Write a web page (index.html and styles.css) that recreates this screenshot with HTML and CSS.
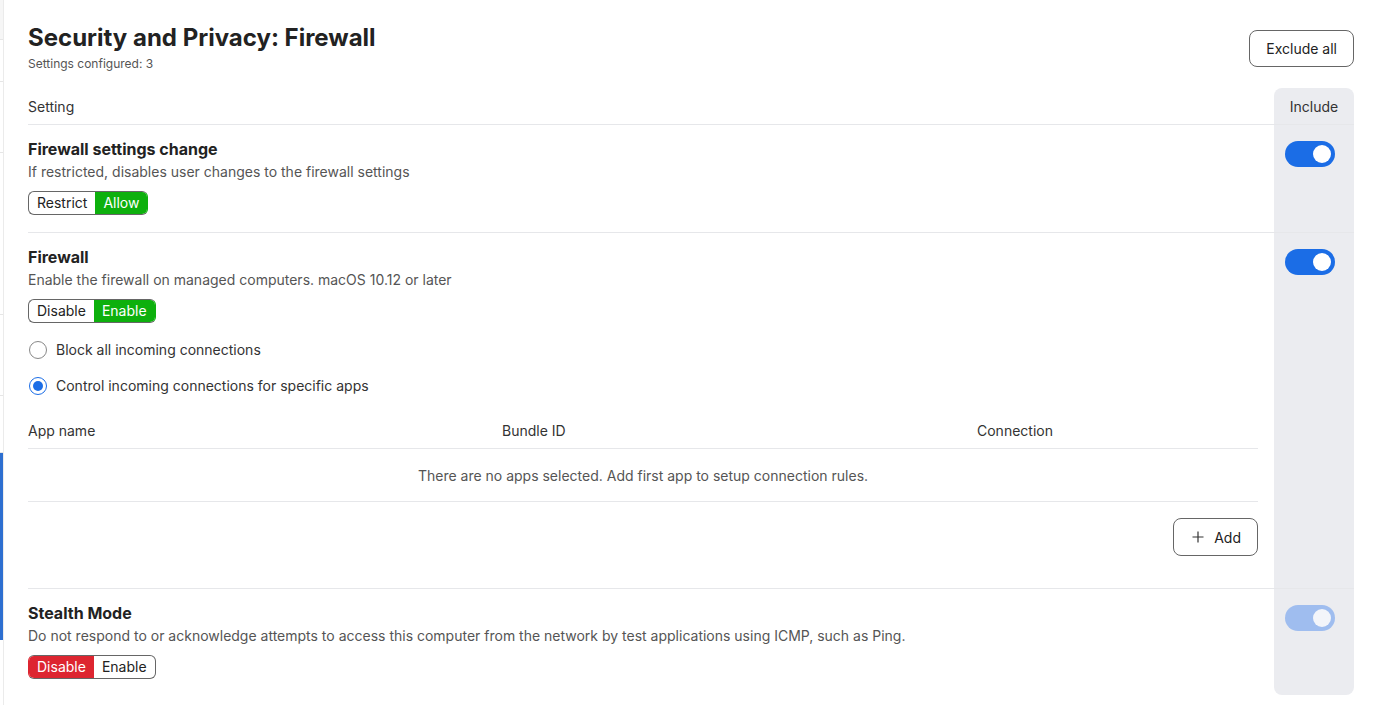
FILE: index.html
```html
<!DOCTYPE html>
<html lang="en">
<head>
  <meta charset="UTF-8" />
  <title>Security and Privacy: Firewall</title>
  <link rel="stylesheet" href="styles.css">
</head>
<body>

<div class="side">
  <div class="side-cell top"></div>
  <div class="side-cell" style="height: 41px"></div>
  <div class="side-cell" style="height: 70px"></div>
  <div class="side-cell" style="height: 161px"></div>
  <div class="side-cell" style="height: 80px"></div>
  <div class="side-cell" style="height: 56px"></div>
  <div class="side-active"></div>
</div>

<main class="content">
  <div class="page-head">
    <div>
      <h1>Security and Privacy: Firewall</h1>
      <div class="configured">Settings configured: 3</div>
    </div>
    <button class="btn">Exclude all</button>
  </div>

  <div class="settings">
    <div class="row head">
      <div class="cell-main">Setting</div>
      <div class="cell-include first">Include</div>
    </div>

    <!-- Firewall settings change -->
    <div class="row">
      <div class="cell-main">
        <div class="setting-title">Firewall settings change</div>
        <div class="setting-desc">If restricted, disables user changes to the firewall settings</div>
        <div class="segmented">
          <span>Restrict</span>
          <span class="on-green">Allow</span>
        </div>
      </div>
      <div class="cell-include"><span class="toggle"></span></div>
    </div>

    <!-- Firewall -->
    <div class="row">
      <div class="cell-main pad-more">
        <div class="setting-title">Firewall</div>
        <div class="setting-desc">Enable the firewall on managed computers. macOS 10.12 or later</div>
        <div class="segmented">
          <span>Disable</span>
          <span class="on-green">Enable</span>
        </div>

        <div class="radios">
          <label class="radio"><span class="dot"></span>Block all incoming connections</label>
          <label class="radio"><span class="dot checked"></span>Control incoming connections for specific apps</label>
        </div>

        <div class="apps">
          <div class="apps-head">
            <div>App name</div>
            <div>Bundle ID</div>
            <div>Connection</div>
          </div>
          <div class="apps-empty">There are no apps selected. Add first app to setup connection rules.</div>
          <div class="apps-actions">
            <button class="btn add">
              <svg width="12" height="12" viewBox="0 0 12 12"><path d="M6 0.5v11M0.5 6h11" stroke="#333" stroke-width="1.2" fill="none"/></svg>
              Add
            </button>
          </div>
        </div>
      </div>
      <div class="cell-include"><span class="toggle"></span></div>
    </div>

    <!-- Stealth Mode -->
    <div class="row last">
      <div class="cell-main">
        <div class="setting-title">Stealth Mode</div>
        <div class="setting-desc">Do not respond to or acknowledge attempts to access this computer from the network by test applications using ICMP, such as Ping.</div>
        <div class="segmented">
          <span class="on-red">Disable</span>
          <span>Enable</span>
        </div>
      </div>
      <div class="cell-include end"><span class="toggle off"></span></div>
    </div>
  </div>
</main>

</body>
</html>
```

FILE: styles.css
```css
body {
  font-family: Inter, 'Noto Sans', sans-serif;
  margin: 0;
  background: #fff;
  color: #222;
  display: flex;
  min-height: 100vh;
}
.side {
  width: 3px;
  border-right: 1px solid #ebebeb;
  flex-shrink: 0;
  display: flex;
  flex-direction: column;
}
.side-cell {
  border-bottom: 1px solid #e6e6e6;
}
.side-cell.top {
  height: 39px;
  background: #f6f6f6;
}
.side-active {
  height: 187px;
  background: #2d6fd0;
  width: 3px;
}
.content {
  flex: 1;
  padding: 0 20px 0 24px;
}
.page-head {
  display: flex;
  justify-content: space-between;
  align-items: flex-start;
  padding-top: 22px;
  height: 66px;
}
h1 {
  margin: 0;
  font-size: 24px;
  line-height: 32px;
  font-weight: 700;
  color: #222;
}
.configured {
  font-size: 12px;
  color: #555;
  margin-top: 2px;
}
.btn {
  font-family: inherit;
  font-size: 14px;
  color: #222;
  background: #fff;
  border: 1px solid #666;
  border-radius: 8px;
  height: 37px;
  padding: 0 16px;
  cursor: pointer;
  margin-top: 8px;
}
.settings {
  display: flex;
  flex-direction: column;
}
.row {
  display: grid;
  grid-template-columns: 1fr 80px;
  border-bottom: 1px solid #e6e7ea;
}
.row.last {
  border-bottom: none;
}
.row.head {
  height: 36px;
  font-size: 14px;
  color: #333;
}
.row.head .cell-main,
.row.head .cell-include {
  display: flex;
  align-items: center;
  padding: 0;
}
.row.head .cell-include {
  justify-content: center;
}
.cell-main {
  padding: 14px 16px 17px 0;
}
.cell-main.pad-more {
  padding-bottom: 32px;
}
.row.last .cell-main {
  padding-bottom: 16px;
}
.cell-include {
  background: #ebecf0;
  display: flex;
  justify-content: flex-start;
  align-items: flex-start;
  padding: 16px 0 0 11px;
}
.cell-include.first {
  border-radius: 8px 8px 0 0;
}
.cell-include.end {
  border-radius: 0 0 8px 8px;
}
.setting-title {
  font-size: 16px;
  line-height: 20px;
  font-weight: 700;
  color: #222;
}
.setting-desc {
  font-size: 14px;
  line-height: 20px;
  color: #555;
  margin-top: 3px;
}
.segmented {
  display: inline-flex;
  margin-top: 9px;
  border: 1px solid #666;
  border-radius: 6px;
  overflow: hidden;
  height: 22px;
  font-size: 14px;
}
.segmented span {
  padding: 0 8px;
  line-height: 22px;
  color: #222;
}
.segmented .on-green {
  background: #0db00d;
  color: #fff;
}
.segmented .on-red {
  background: #dd2530;
  color: #fff;
}
.segmented:has(.on-green) {
  border-right-color: #0db00d;
}
.segmented:has(.on-red) {
  border-left-color: #dd2530;
}
.toggle {
  width: 50px;
  height: 26px;
  border-radius: 13px;
  background: #1b6de6;
  position: relative;
}
.toggle::after {
  content: '';
  position: absolute;
  right: 4px;
  top: 4px;
  width: 18px;
  height: 18px;
  border-radius: 50%;
  background: #fff;
}
.toggle.off {
  background: #9fbdef;
}
.toggle.off::after {
  background: #f3f5fa;
}
.radios {
  display: flex;
  flex-direction: column;
  gap: 16px;
  margin-top: 17px;
}
.radio {
  display: flex;
  align-items: center;
  gap: 9px;
  font-size: 14px;
  line-height: 20px;
  color: #333;
}
.dot {
  width: 18px;
  height: 18px;
  border: 1px solid #888;
  border-radius: 50%;
  box-sizing: border-box;
  margin-left: 1px;
  position: relative;
}
.dot.checked {
  border-color: #1b6de6;
  border-width: 1.5px;
}
.dot.checked::after {
  content: '';
  position: absolute;
  left: 2.5px;
  top: 2.5px;
  width: 10px;
  height: 10px;
  border-radius: 50%;
  background: #1b6de6;
}
.apps {
  margin-top: 16px;
  font-size: 14px;
}
.apps-head {
  display: grid;
  grid-template-columns: 474px 475px 1fr;
  height: 36px;
  align-items: center;
  color: #333;
  border-bottom: 1px solid #e6e7ea;
}
.apps-empty {
  height: 52px;
  display: flex;
  align-items: center;
  justify-content: center;
  color: #555;
  border-bottom: 1px solid #e6e7ea;
}
.apps-actions {
  display: flex;
  justify-content: flex-end;
  padding-top: 16px;
}
.btn.add {
  display: flex;
  align-items: center;
  gap: 10px;
  padding: 0 16px 0 18px;
  height: 38px;
  margin-top: 0;
}
```
